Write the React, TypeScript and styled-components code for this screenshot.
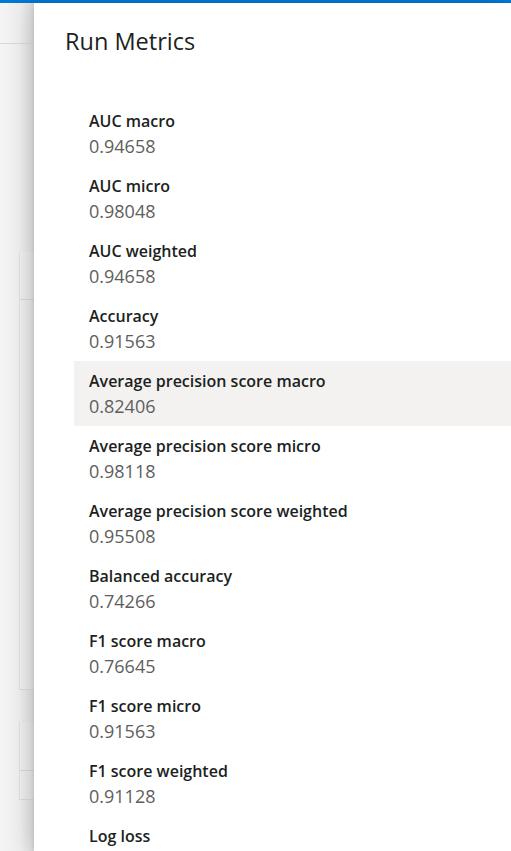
import React from "react";
import styled, { createGlobalStyle } from "styled-components";

const Global = createGlobalStyle`
  html, body { margin: 0; padding: 0; }
  body {
    font-family: "Open Sans", "Noto Sans", sans-serif;
    background: #ffffff;
    overflow: hidden;
  }
  #root { height: 100vh; }
`;

const Shell = styled.div`
  height: 100vh;
  display: flex;
  flex-direction: column;
  overflow: hidden;
`;

const TopBar = styled.div`
  height: 3px;
  flex: 0 0 3px;
  background: #0078d4;
`;

const Stage = styled.div`
  flex: 1;
  display: flex;
  min-height: 0;
`;

const Backdrop = styled.div`
  width: 34px;
  flex: 0 0 34px;
  background: linear-gradient(to right, #f4f4f4 0%, #efefef 60%, #dedede 100%);
  display: flex;
  flex-direction: column;
  overflow: hidden;
`;

const BackHeader = styled.div`
  height: 40px;
  border-bottom: 1px solid #d8d8d8;
`;

const BackCard = styled.div<{ $top: number; $head: number; $height: number }>`
  margin-top: ${(p) => p.$top}px;
  margin-left: 19px;
  height: ${(p) => p.$height}px;
  border-left: 1px solid #e2e2e2;
  border-bottom: 1px solid #dadada;
  display: flex;
  flex-direction: column;
  background: rgba(255, 255, 255, 0.15);
  & > div {
    height: ${(p) => p.$head}px;
    border-bottom: 1px solid #d6d6d6;
  }
`;

const Panel = styled.section`
  flex: 1;
  background: #ffffff;
  box-shadow: -6px 0 22px rgba(0, 0, 0, 0.12), -1px 0 4px rgba(0, 0, 0, 0.06);
  position: relative;
  z-index: 1;
  overflow: hidden;
  display: flex;
  flex-direction: column;
`;

const Title = styled.h1`
  margin: 0;
  padding: 22px 0 0 31px;
  font-size: 23.5px;
  line-height: 32px;
  font-weight: 400;
  color: #201f1e;
`;

const List = styled.div`
  margin-top: 44px;
  padding-left: 40px;
  display: flex;
  flex-direction: column;
`;

const Row = styled.div<{ $active?: boolean }>`
  height: 65px;
  box-sizing: border-box;
  padding: 9px 0 0 15px;
  background: ${(p) => (p.$active ? "#f3f2f1" : "transparent")};
`;

const Label = styled.div`
  font-size: 16px;
  line-height: 22px;
  font-weight: 600;
  color: #201f1e;
`;

const Value = styled.div`
  font-size: 18px;
  line-height: 28px;
  font-weight: 400;
  color: #605e5c;
  min-height: 28px;
`;

const metrics: [string, string][] = [
  ["AUC macro", "0.94658"],
  ["AUC micro", "0.98048"],
  ["AUC weighted", "0.94658"],
  ["Accuracy", "0.91563"],
  ["Average precision score macro", "0.82406"],
  ["Average precision score micro", "0.98118"],
  ["Average precision score weighted", "0.95508"],
  ["Balanced accuracy", "0.74266"],
  ["F1 score macro", "0.76645"],
  ["F1 score micro", "0.91563"],
  ["F1 score weighted", "0.91128"],
  ["Log loss", ""],
];

export default function App() {
  return (
    <Shell>
      <Global />
      <TopBar />
      <Stage>
        <Backdrop>
          <BackHeader />
          <BackCard $top={208} $head={47} $height={437}>
            <div />
          </BackCard>
          <BackCard $top={32} $head={48} $height={77}>
            <div />
          </BackCard>
        </Backdrop>
        <Panel>
          <Title>Run Metrics</Title>
          <List>
            {metrics.map(([k, v], i) => (
              <Row key={k} $active={i === 4}>
                <Label>{k}</Label>
                <Value>{v}</Value>
              </Row>
            ))}
          </List>
        </Panel>
      </Stage>
    </Shell>
  );
}
